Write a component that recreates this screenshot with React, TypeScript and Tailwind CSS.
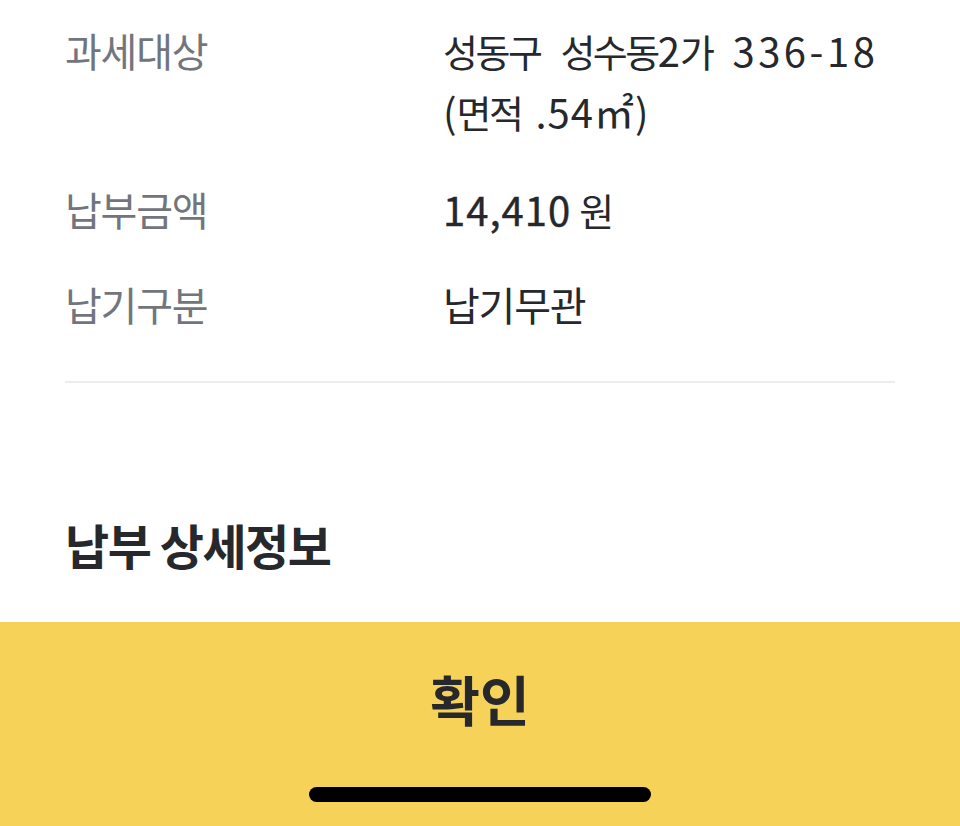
export default function App() {
  const label = "w-[378px] shrink-0 text-[40px] tracking-[-1.2px] text-[#72767c]";
  const ko = "text-[38px] tracking-[-2.5px]";
  return (
    <div
      className="w-[960px] h-[826px] bg-white flex flex-col overflow-hidden"
      style={{ fontFamily: '"Noto Sans CJK KR", "Noto Sans", sans-serif' }}
    >
      <div className="flex-1 px-[65px] pt-[20px]">
        <div className="flex leading-[60px]">
          <div className={label}>과세대상</div>
          <div className="text-[#26282b] text-[40px]">
            <div className="whitespace-nowrap">
              <span className={ko}>성동구</span>
              <span className={`ml-[20px] ${ko}`}>성수동</span>
              <span>2</span>
              <span className={ko}>가</span>
              <span className="ml-[20px] tracking-[3.5px]">336-18</span>
            </div>
            <div className="whitespace-nowrap">
              <span>(</span>
              <span className={ko}>면적</span>
              <span className="ml-[14px] tracking-[1px]">.54㎡)</span>
            </div>
          </div>
        </div>
        <div className="flex leading-[60px] mt-[37px]">
          <div className={label}>납부금액</div>
          <div className="text-[#26282b] text-[40px]">
            <span className="tracking-[1px] [-webkit-text-stroke:0.4px_#26282b]">14,410</span>
            <span className={`ml-[8px] ${ko}`}>원</span>
          </div>
        </div>
        <div className="flex leading-[60px] mt-[34px]">
          <div className={label}>납기구분</div>
          <div className="text-[#26282b] text-[40px] tracking-[-1.2px]">납기무관</div>
        </div>
        <div className="h-[2px] bg-[#ebecef] mt-[47px]" />
        <div className="mt-[131px] text-[48px] leading-[60px] font-bold text-[#26282b] tracking-[-1.5px]">
          납부 상세정보
        </div>
      </div>
      <div className="h-[204px] bg-[#f6d258] flex flex-col items-center">
        <div className="mt-[47px] text-[54px] leading-[60px] font-bold text-[#26282b]">확인</div>
        <div className="mt-[58px] w-[342px] h-[15px] rounded-full bg-black" />
      </div>
    </div>
  );
}
